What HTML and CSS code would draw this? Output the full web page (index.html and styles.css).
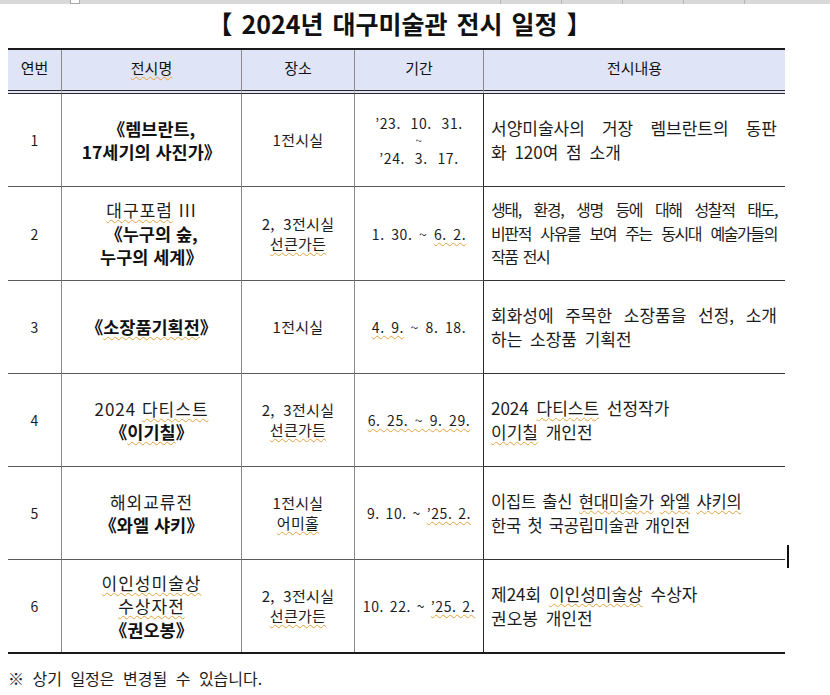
FILE: index.html
```html
<!DOCTYPE html>
<html lang="ko">
<head>
<meta charset="utf-8">
<title>2024년 대구미술관 전시 일정</title>
<link rel="stylesheet" href="styles.css">
</head>
<body>
<div class="ruler">
  <span class="ruler-knob"></span>
  <span class="ruler-ticks">
    <span class="ruler-tick"></span><span class="ruler-tick"></span><span class="ruler-tick"></span><span class="ruler-tick"></span><span class="ruler-tick"></span>
  </span>
</div>
<h1 class="title">【 2024년 대구미술관 전시 일정 】</h1>
<div class="schedule">
  <div class="row">
    <div class="cell head">연번</div>
    <div class="cell head"><span class="sp">전시명</span></div>
    <div class="cell head">장소</div>
    <div class="cell head">기간</div>
    <div class="cell head c5">전시내용</div>
  </div>
  <div class="row">
    <div class="cell num">1</div>
    <div class="cell name"><div class="nb">《렘브란트,</div><div class="nb">17세기의 사진가》</div></div>
    <div class="cell place"><div>1전시실</div></div>
    <div class="cell date wide"><div class="dl">’23. 10. 31.</div><div class="tilde">~</div><div class="dl">’24. 3. 17.</div></div>
    <div class="cell c5 text"><div class="j">서양미술사의 거장 렘브란트의 동판</div><div>화 120여 점 소개</div></div>
  </div>
  <div class="row">
    <div class="cell num">2</div>
    <div class="cell name"><div class="nr"><span class="sp">대구포럼</span> III</div><div class="nb">《누구의 숲,</div><div class="nb">누구의 세계》</div></div>
    <div class="cell place"><div>2, 3전시실</div><div><span class="sp">선큰가든</span></div></div>
    <div class="cell date"><div class="dl">1. 30. ~ <span class="sp">6. 2.</span></div></div>
    <div class="cell c5 text cond"><div class="j">생태, 환경, 생명 등에 대해 성찰적 태도,</div><div class="j">비판적 사유를 보여 주는 동시대 예술가들의</div><div>작품 전시</div></div>
  </div>
  <div class="row">
    <div class="cell num">3</div>
    <div class="cell name"><div class="nb">《<span class="sp">소장품기획전</span>》</div></div>
    <div class="cell place"><div>1전시실</div></div>
    <div class="cell date"><div class="dl"><span class="sp">4. 9.</span> ~ 8. 18.</div></div>
    <div class="cell c5 text"><div class="j">회화성에 주목한 소장품을 선정, 소개</div><div>하는 소장품 기획전</div></div>
  </div>
  <div class="row">
    <div class="cell num">4</div>
    <div class="cell name"><div class="nr">2024 <span class="sp">다티스트</span></div><div class="nb">《<span class="sp">이기칠</span>》</div></div>
    <div class="cell place"><div>2, 3전시실</div><div><span class="sp">선큰가든</span></div></div>
    <div class="cell date"><div class="dl"><span class="sp">6. 25. ~ 9. 29.</span></div></div>
    <div class="cell c5 text"><div>2024 <span class="sp">다티스트</span> 선정작가</div><div><span class="sp">이기칠</span> 개인전</div></div>
  </div>
  <div class="row">
    <div class="cell num">5</div>
    <div class="cell name"><div class="nr">해외교류전</div><div class="nb">《와엘 샤키》</div></div>
    <div class="cell place"><div>1전시실</div><div><span class="sp">어미홀</span></div></div>
    <div class="cell date"><div class="dl">9. 10. ~ <span class="sp">’25. 2.</span></div></div>
    <div class="cell c5 text semi"><div>이집트 출신 <span class="sp">현대미술가</span> <span class="sp">와엘</span> <span class="sp">샤키의</span></div><div>한국 첫 국공립미술관 개인전</div></div>
  </div>
  <div class="row">
    <div class="cell num">6</div>
    <div class="cell name"><div class="nr"><span class="sp">이인성미술상</span></div><div class="nr"><span class="sp">수상자전</span></div><div class="nb">《권오봉》</div></div>
    <div class="cell place"><div>2, 3전시실</div><div><span class="sp">선큰가든</span></div></div>
    <div class="cell date"><div class="dl">10. 22. ~ <span class="sp">’25. 2.</span></div></div>
    <div class="cell c5 text"><div>제24회 <span class="sp">이인성미술상</span> 수상자</div><div>권오봉 개인전</div></div>
  </div>
</div>
<p class="note">※ 상기 일정은 변경될 수 있습니다.</p>
<span class="caret"></span>
</body>
</html>
```

FILE: styles.css
```css
* { box-sizing: border-box; }
html, body { margin: 0; padding: 0; background: #ffffff; }
body {
  position: relative;
  width: 830px;
  height: 695px;
  overflow: hidden;
  font-family: "Noto Sans CJK KR", "Noto Sans", sans-serif;
  color: #1c1c1c;
}

/* top ruler strip */
.ruler {
  display: flex;
  align-items: flex-start;
  height: 4px;
  background: #d9d9d9;
}
.ruler-knob {
  width: 10px;
  height: 4px;
  margin-left: 70px;
  background: #ffffff;
  border: 1px solid #a8a8a8;
  border-top: 0;
}
.ruler-ticks {
  display: flex;
  gap: 60px;
  margin-left: 420px;
  height: 4px;
}
.ruler-tick { width: 1px; height: 4px; background: #b5b5b5; }

.title {
  margin: 4px 0 10px 8px;
  padding-left: 6px;
  width: 777px;
  text-align: center;
  font-size: 25px;
  line-height: 30px;
  font-weight: 700;
  color: #111111;
  word-spacing: 2px;
}

/* table */
.schedule {
  display: grid;
  grid-template-columns: 54px 180px 113px 129px 301px;
  grid-template-rows: 44px 93px 94px 93px 93px 93px 92px;
  width: 777px;
  margin-left: 8px;
  border-top: 2px solid #1a1a1a;
  border-bottom: 2px solid #1a1a1a;
}
.row { display: contents; }
.cell {
  display: flex;
  flex-direction: column;
  justify-content: center;
  align-items: center;
  text-align: center;
  border-right: 1px solid #8a8a8a;
  border-bottom: 1px solid #5a5a5a;
}
.row:last-child .cell { border-bottom: 0; }
.cell.date { border-right-color: #2a2a2a; }
.cell.c5 {
  border-right: 0;
  border-bottom-color: #333333;
  align-items: stretch;
  text-align: left;
  padding: 0 8px 0 7px;
}
.cell.head {
  background: #dfe4f7;
  border-bottom: 4px double #2a2a2a;
  font-size: 15px;
  line-height: 20px;
  padding-bottom: 4px;
  color: #111111;
}
.cell.head.c5 { align-items: center; text-align: center; padding: 0 0 4px 0; }

.num { font-size: 14px; }

.name { font-size: 17.5px; line-height: 23.5px; }
.nb { font-weight: 700; color: #111111; }
.nr { font-weight: 400; font-size: 17px; letter-spacing: 1px; }

.place { font-size: 15px; line-height: 20px; letter-spacing: 0.3px; word-spacing: 4px; }

.date { font-size: 14px; line-height: 18px; letter-spacing: 0.6px; word-spacing: 2px; }
.date.wide { word-spacing: 6px; }
.tilde { font-size: 11px; line-height: 17px; }

.text { font-size: 17px; line-height: 24px; word-spacing: 3px; }
.text .j { text-align: justify; text-align-last: justify; }
.text.cond { font-size: 16px; letter-spacing: -1.4px; word-spacing: 2px; line-height: 23.5px; }
.text.semi { font-size: 16.5px; letter-spacing: -0.2px; word-spacing: 2px; }

.sp {
  text-decoration-line: underline;
  text-decoration-style: wavy;
  text-decoration-color: #e3a23c;
  text-decoration-thickness: 1px;
  text-underline-offset: 2px;
}

.note {
  margin: 14px 0 0 8px;
  font-size: 16px;
  line-height: 20px;
  word-spacing: 4px;
  color: #1c1c1c;
}

.caret {
  position: absolute;
  left: 787px;
  top: 545px;
  width: 2px;
  height: 23px;
  background: #111111;
}
```
